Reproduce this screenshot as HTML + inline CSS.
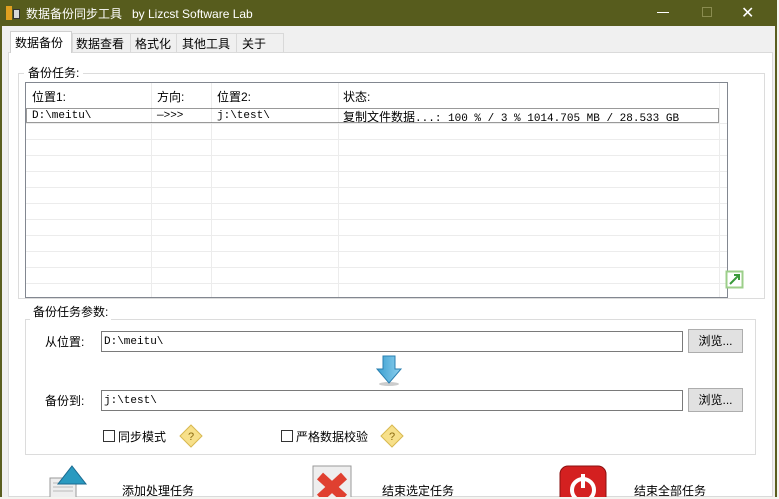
<!DOCTYPE html>
<html><head><meta charset="utf-8"><style>
*{box-sizing:border-box;margin:0;padding:0}
body{width:779px;height:497px;overflow:hidden;background:#f4f4f0;font-family:"Liberation Sans","Noto Sans CJK SC",sans-serif;font-size:12px;color:#000;position:relative}
.a{position:absolute}
.mono{font-family:"Liberation Mono","Noto Sans CJK SC",monospace;font-size:11px}
</style></head><body>
<div class="a" style="left:0;top:0;width:777px;height:497px;background:#5a5e1f"></div>
<div class="a" style="left:0;top:0;width:777px;height:26px;background:#575c1d"></div>
<div class="a" style="left:6px;top:6px;width:6px;height:14px;background:#e0a020"></div>
<div class="a" style="left:13px;top:9px;width:7px;height:10px;background:#d8d8d8;border:1px solid #333"></div>
<div class="a" style="left:26px;top:5px;color:#fff;font-size:12px">数据备份同步工具&nbsp;&nbsp; by Lizcst Software Lab</div>
<div class="a" style="left:657px;top:12px;width:12px;height:1px;background:#fff"></div>
<div class="a" style="left:702px;top:7px;width:10px;height:10px;border:1px solid #8a8c50"></div>
<div class="a" style="left:741px;top:3px;color:#fff;font-size:16px">✕</div>
<div class="a" style="left:2px;top:26px;width:773px;height:471px;background:#f0f0f0"></div>
<div class="a" style="left:8px;top:52px;width:765px;height:445px;background:#fff;border:1px solid #dadada"></div>
<div class="a" style="left:10px;top:31px;width:62px;height:22px;background:#fff;border:1px solid #d0d0d0;border-bottom:none"></div>
<div class="a" style="left:72px;top:33px;width:212px;height:19px;border:1px solid #d9d9d9;border-bottom:none"></div>
<div class="a" style="left:130px;top:33px;width:1px;height:19px;background:#d9d9d9"></div>
<div class="a" style="left:176px;top:33px;width:1px;height:19px;background:#d9d9d9"></div>
<div class="a" style="left:236px;top:33px;width:1px;height:19px;background:#d9d9d9"></div>
<div class="a" style="left:15px;top:34px">数据备份</div>
<div class="a" style="left:76px;top:35px">数据查看</div>
<div class="a" style="left:135px;top:35px">格式化</div>
<div class="a" style="left:182px;top:35px">其他工具</div>
<div class="a" style="left:242px;top:35px">关于</div>
<div class="a" style="left:18px;top:73px;width:747px;height:226px;border:1px solid #dcdcdc"></div>
<div class="a" style="left:24px;top:64px;background:#fff;padding:0 4px">备份任务:</div>
<div class="a" style="left:25px;top:82px;width:703px;height:216px;border:1px solid #828790;background:#fff;overflow:hidden">
<svg width="703" height="216" style="position:absolute;left:0;top:0">
<g stroke="#ececec">
<line x1="0" y1="40.5" x2="703" y2="40.5"/><line x1="0" y1="56.5" x2="703" y2="56.5"/><line x1="0" y1="72.5" x2="703" y2="72.5"/><line x1="0" y1="88.5" x2="703" y2="88.5"/><line x1="0" y1="104.5" x2="703" y2="104.5"/><line x1="0" y1="120.5" x2="703" y2="120.5"/><line x1="0" y1="136.5" x2="703" y2="136.5"/><line x1="0" y1="152.5" x2="703" y2="152.5"/><line x1="0" y1="168.5" x2="703" y2="168.5"/><line x1="0" y1="184.5" x2="703" y2="184.5"/><line x1="0" y1="200.5" x2="703" y2="200.5"/>
<line x1="125.5" y1="0" x2="125.5" y2="216"/><line x1="185.5" y1="0" x2="185.5" y2="216"/><line x1="312.5" y1="0" x2="312.5" y2="216"/><line x1="693.5" y1="0" x2="693.5" y2="216"/>
</g>
<rect x="0.5" y="25.5" width="692" height="14" fill="none" stroke="#333" stroke-dasharray="1,1"/>
</svg>
<div class="a" style="left:6px;top:5px">位置1:</div>
<div class="a" style="left:131px;top:5px">方向:</div>
<div class="a" style="left:191px;top:5px">位置2:</div>
<div class="a" style="left:317px;top:5px">状态:</div>
<div class="a mono" style="left:6px;top:27px">D:\meitu\</div>
<div class="a mono" style="left:131px;top:27px">—>>></div>
<div class="a mono" style="left:191px;top:27px">j:\test\</div>
<div class="a mono" style="left:317px;top:25px"><span style="font-size:12px">复制文件数据</span>...: 100 % / 3 %  1014.705 MB / 28.533 GB</div>
</div>
<svg class="a" style="left:725px;top:270px" width="20" height="20"><rect x="1.5" y="1.5" width="16" height="16" fill="#fff" stroke="#9ccf8a" stroke-width="2"/><path d="M5 14L14 5M9 5h5v5" stroke="#3a9a3a" stroke-width="2" fill="none"/></svg>
<div class="a" style="left:25px;top:319px;width:731px;height:136px;border:1px solid #dcdcdc"></div>
<div class="a" style="left:30px;top:303px;background:#fff;padding:0 3px">备份任务参数:</div>
<div class="a" style="left:45px;top:333px">从位置:</div>
<div class="a mono" style="left:101px;top:331px;width:582px;height:21px;border:1px solid #7a7a7a;padding:4px 2px">D:\meitu\</div>
<div class="a" style="left:688px;top:329px;width:55px;height:24px;background:#e1e1e1;border:1px solid #adadad;text-align:center;line-height:22px">浏览...</div>
<svg class="a" style="left:372px;top:354px" width="34" height="34"><defs><linearGradient id="g" x1="0" x2="1"><stop offset="0" stop-color="#3a9fd0"/><stop offset="1" stop-color="#8fd0ee"/></linearGradient></defs><ellipse cx="17" cy="30" rx="10" ry="2" fill="#ccc"/><path d="M11 2h12v13h6l-12 14-12-14h6z" fill="url(#g)" stroke="#2a7fb0"/></svg>
<div class="a" style="left:45px;top:392px">备份到:</div>
<div class="a mono" style="left:101px;top:390px;width:582px;height:21px;border:1px solid #7a7a7a;padding:4px 2px">j:\test\</div>
<div class="a" style="left:688px;top:388px;width:55px;height:24px;background:#e1e1e1;border:1px solid #adadad;text-align:center;line-height:22px">浏览...</div>
<div class="a" style="left:103px;top:430px;width:12px;height:12px;border:1px solid #333"></div>
<div class="a" style="left:118px;top:428px">同步模式</div>
<div class="a" style="left:281px;top:430px;width:12px;height:12px;border:1px solid #333"></div>
<div class="a" style="left:296px;top:428px">严格数据校验</div>
<svg class="a" style="left:179px;top:424px" width="24" height="24"><path d="M12 1L23 12L12 23L1 12Z" fill="#f7e08a" stroke="#d8b850"/><text x="12" y="16" font-size="11" text-anchor="middle" fill="#8a6a10" font-family="Liberation Sans">?</text></svg>
<svg class="a" style="left:380px;top:424px" width="24" height="24"><path d="M12 1L23 12L12 23L1 12Z" fill="#f7e08a" stroke="#d8b850"/><text x="12" y="16" font-size="11" text-anchor="middle" fill="#8a6a10" font-family="Liberation Sans">?</text></svg>
<svg class="a" style="left:46px;top:464px" width="44" height="33"><rect x="4" y="14" width="26" height="20" fill="#eee" stroke="#999"/><path d="M7 19h20M7 23h20M7 27h20" stroke="#bbb"/><path d="M26 2L40 20H12Z" fill="#2a9ac0" stroke="#1a6a90"/></svg>
<div class="a" style="left:122px;top:482px">添加处理任务</div>
<svg class="a" style="left:310px;top:464px" width="44" height="33"><rect x="3" y="2" width="38" height="34" fill="#eee" stroke="#999"/><path d="M10 12L34 34M34 12L10 34" stroke="#e04030" stroke-width="9"/></svg>
<div class="a" style="left:382px;top:482px">结束选定任务</div>
<svg class="a" style="left:558px;top:464px" width="50" height="33"><rect x="2" y="2" width="46" height="40" rx="8" fill="#d42020" stroke="#8a1010"/><circle cx="25" cy="26" r="11" fill="none" stroke="#fff" stroke-width="4"/><path d="M25 10v14" stroke="#fff" stroke-width="4"/></svg>
<div class="a" style="left:634px;top:482px">结束全部任务</div>
</body></html>
